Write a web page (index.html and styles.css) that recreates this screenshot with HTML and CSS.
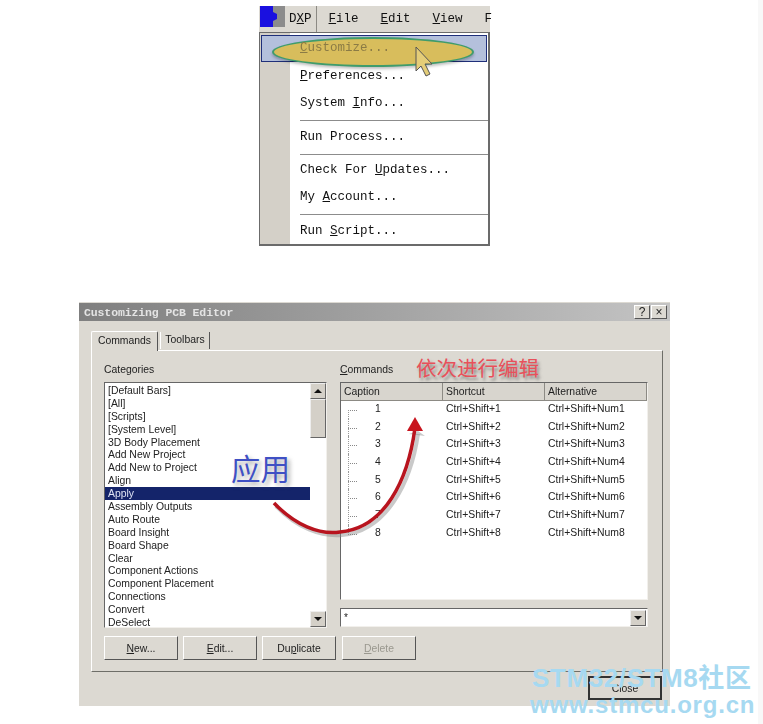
FILE: index.html
```html
<!DOCTYPE html>
<html lang="zh-CN">
<head>
    <meta charset="UTF-8">
    <meta name="viewport" content="width=device-width, initial-scale=1.0">
    <title>Customizing PCB Editor</title>
    <link rel="stylesheet" href="styles.css">
</head>
<body>
    <div class="menu">
        <div class="menubar">
            <svg class="logo" width="25" height="21" viewBox="0 0 25 21">
                <rect x="12" width="13" height="21" fill="#8c8c8c"/>
                <path d="M0 0H13V6L17 8V13L13 15V21H0Z" fill="#1a10e0"/>
            </svg>
            <span class="menubar-item dxp">D<u>X</u>P</span>
            <span class="menubar-item"><u>F</u>ile</span>
            <span class="menubar-item"><u>E</u>dit</span>
            <span class="menubar-item"><u>V</u>iew</span>
            <span class="menubar-item">F</span>
        </div>
        <div class="menu-body">
            <div class="menu-item active"><span class="menu-text"><u>C</u>ustomize...</span></div>
            <div class="menu-item"><u>P</u>references...</div>
            <div class="menu-item">System <u>I</u>nfo...</div>
            <div class="menu-sep"></div>
            <div class="menu-item">Run Process...</div>
            <div class="menu-sep short"></div>
            <div class="menu-item">Check For <u>U</u>pdates...</div>
            <div class="menu-item">My <u>A</u>ccount...</div>
            <div class="menu-sep"></div>
            <div class="menu-item">Run <u>S</u>cript...</div>
        </div>
    </div>

    <div class="dialog">
        <div class="titlebar">
            <span class="title">Customizing PCB Editor</span>
            <span class="title-btn">?</span>
            <span class="title-btn">×</span>
        </div>
        <div class="tabs">
            <span class="tab current">Commands</span>
            <span class="tab">Toolbars</span>
        </div>
        <div class="panel">
            <div class="columns">
                <div class="col">
                    <div class="label">Categories</div>
                    <div class="listbox">
                        <ul class="list">
                            <li>[Default Bars]</li>
                            <li>[All]</li>
                            <li>[Scripts]</li>
                            <li>[System Level]</li>
                            <li>3D Body Placement</li>
                            <li>Add New Project</li>
                            <li>Add New to Project</li>
                            <li>Align</li>
                            <li class="selected">Apply</li>
                            <li>Assembly Outputs</li>
                            <li>Auto Route</li>
                            <li>Board Insight</li>
                            <li>Board Shape</li>
                            <li>Clear</li>
                            <li>Component Actions</li>
                            <li>Component Placement</li>
                            <li>Connections</li>
                            <li>Convert</li>
                            <li>DeSelect</li>
                        </ul>
                        <div class="scrollbar">
                            <span class="arrow-btn up"></span>
                            <span class="thumb"></span>
                            <span class="track"></span>
                            <span class="arrow-btn down"></span>
                        </div>
                    </div>
                </div>
                <div class="col">
                    <div class="label"><u>C</u>ommands</div>
                    <div class="table">
                        <div class="thead">
                            <span>Caption</span>
                            <span>Shortcut</span>
                            <span>Alternative</span>
                        </div>
                        <div class="rows">
                            <div class="row"><span class="num">1</span><span>Ctrl+Shift+1</span><span>Ctrl+Shift+Num1</span></div>
                            <div class="row"><span class="num">2</span><span>Ctrl+Shift+2</span><span>Ctrl+Shift+Num2</span></div>
                            <div class="row"><span class="num">3</span><span>Ctrl+Shift+3</span><span>Ctrl+Shift+Num3</span></div>
                            <div class="row"><span class="num">4</span><span>Ctrl+Shift+4</span><span>Ctrl+Shift+Num4</span></div>
                            <div class="row"><span class="num">5</span><span>Ctrl+Shift+5</span><span>Ctrl+Shift+Num5</span></div>
                            <div class="row"><span class="num">6</span><span>Ctrl+Shift+6</span><span>Ctrl+Shift+Num6</span></div>
                            <div class="row"><span class="num">7</span><span>Ctrl+Shift+7</span><span>Ctrl+Shift+Num7</span></div>
                            <div class="row"><span class="num">8</span><span>Ctrl+Shift+8</span><span>Ctrl+Shift+Num8</span></div>
                        </div>
                    </div>
                    <div class="combo">
                        <span class="combo-text">*</span>
                        <span class="arrow-btn down"></span>
                    </div>
                </div>
            </div>
            <div class="buttons">
                <span class="button"><u>N</u>ew...</span>
                <span class="button"><u>E</u>dit...</span>
                <span class="button">Du<u>p</u>licate</span>
                <span class="button disabled"><u>D</u>elete</span>
            </div>
        </div>
        <div class="footer">
            <span class="button default">Close</span>
        </div>
    </div>

    <!-- annotations pasted over the screenshots -->
    <svg class="overlay" width="763" height="724" viewBox="0 0 763 724">
        <path d="M416 47V71L421 66L426 76L430 74L425 64L432 64Z" fill="#e4cd78" stroke="#555" stroke-width="1"/>
        <path d="M276 506C297 528 321 537 342 535C387 531 411 482 418 434" fill="none" stroke="#888" stroke-width="4" opacity=".45"/>
        <path d="M418 431L409 434L425 436Z" fill="#888" opacity=".45"/>
        <path d="M274 503C295 525 319 535 340 532C385 528 408 480 415 428" fill="none" stroke="#b8141e" stroke-width="3.5"/>
        <path d="M415 417L407 431H423Z" fill="#c8141e"/>
    </svg>
    <span class="note note-blue">应用</span>
    <span class="note note-red">依次进行编辑</span>
    <div class="watermark">
        <div class="wm-top">STM32/STM8社区</div>
        <div class="wm-bottom">www.stmcu.org.cn</div>
    </div>
</body>
</html>
```

FILE: styles.css
```css
* {
    margin: 0;
    padding: 0;
    box-sizing: border-box;
}

html, body {
    height: 724px;
    overflow: hidden;
}

body {
    position: relative;
    background: linear-gradient(90deg, #fff 758px, #f8f8f8 758px);
    font-family: "Liberation Sans", Arial, sans-serif;
    padding-top: 6px;
}

/* top menu */
.menu {
    width: 231px;
    margin-left: 259px;
    font-family: "Liberation Mono", monospace;
    font-size: 12.5px;
    color: #111;
    filter: blur(.4px);
}

.menubar {
    display: flex;
    align-items: center;
    height: 26px;
    background: #dcd9d2;
}

.logo {
    flex: none;
    margin: 0 4px 5px 1px;
}

.menubar-item {
    margin-right: 22px;
    width: 30px;
    white-space: nowrap;
}

.menubar-item:last-child {
    margin-right: 0;
    width: auto;
}

.menubar-item.dxp {
    width: 28px;
    margin-right: 12px;
    padding-right: 4px;
    height: 26px;
    line-height: 26px;
    border-right: 1px solid #8c8a84;
}

.menu-body {
    border: 1px solid #6b6b6b;
    border-width: 1px 2px 2px 1px;
    padding-top: 2px;
    height: 214px;
    background: linear-gradient(90deg, #d4d0c8 30px, #fff 30px);
}

.menu-item {
    height: 27px;
    line-height: 27px;
    padding-left: 40px;
    white-space: nowrap;
}

.menu-item.active {
    position: relative;
    margin: 0 1px 1px;
    padding-left: 38px;
    height: 27px;
    line-height: 25px;
    background: #b4c0dc;
    border: 1px solid #1f2f7a;
}

/* the yellow ring drawn around the hovered entry */
.menu-item.active::before {
    content: "";
    position: absolute;
    left: 10px;
    top: 1px;
    width: 198px;
    height: 26px;
    border-radius: 50%;
    background: #d8bd5c;
    border: 2px solid #3f9c6c;
    box-shadow: 0 2px 3px rgba(0, 0, 0, .25);
}

.menu-text {
    position: relative;
    color: #8b7b45;
}

.menu-sep {
    height: 7px;
    margin-left: 40px;
}

.menu-sep::before {
    content: "";
    display: block;
    height: 3px;
    border-bottom: 1px solid #8c8c8c;
}

.menu-sep.short {
    height: 6px;
}

/* dialog */
.dialog {
    width: 591px;
    height: 404px;
    margin: 56px 0 0 79px;
    background: #dcd9d2;
    font-size: 10.4px;
    color: #222;
    padding-top: 1px;
    filter: blur(.4px);
}

.titlebar {
    display: flex;
    align-items: center;
    gap: 1px;
    height: 18px;
    padding: 0 3px 0 5px;
    background: linear-gradient(90deg, #7f7f7f, #c4c4c4);
}

.title {
    flex: 1;
    font-family: "Liberation Mono", monospace;
    font-weight: bold;
    font-size: 11.5px;
    letter-spacing: -.01em;
    color: #e4e4e4;
}

.title-btn {
    width: 16px;
    height: 14px;
    line-height: 13px;
    text-align: center;
    font-size: 12px;
    color: #222;
    background: #dcd9d2;
    border: 1px solid;
    border-color: #fff #555 #555 #fff;
}

.tabs {
    display: flex;
    align-items: flex-end;
    height: 29px;
    padding-left: 12px;
}

.tab {
    width: 50px;
    height: 17px;
    line-height: 16px;
    margin: 0 0 1px 2px;
    text-align: center;
    border-right: 1px solid #555;
    border-left: 1px solid #fff;
}

.tab.current {
    width: 67px;
    height: 20px;
    line-height: 18px;
    margin: 0 0 -1px;
    background: #dcd9d2;
    border: 1px solid #fff;
    border-right-color: #555;
    border-bottom: 0;
    border-radius: 2px 2px 0 0;
    position: relative;
}

.panel {
    width: 572px;
    height: 322px;
    margin-left: 12px;
    padding: 12px 12px;
    border: 1px solid;
    border-color: #fff #6e6e68 #6e6e68 #fff;
}

.columns {
    display: grid;
    grid-template-columns: 223px 308px;
    gap: 13px;
}

.label {
    height: 14px;
    line-height: 14px;
    margin-bottom: 5px;
}

.listbox {
    display: flex;
    height: 246px;
    background: #fff;
    border: 1px solid;
    border-color: #666 #f2f0ec #f2f0ec #666;
}

.list {
    flex: 1;
    list-style: none;
    overflow: hidden;
    padding-top: 1px;
}

.list li {
    height: 12.9px;
    line-height: 13px;
    padding-left: 3px;
    white-space: nowrap;
}

.list li.selected {
    background: #14246a;
    color: #dfe4f4;
}

.scrollbar {
    display: flex;
    flex-direction: column;
    flex: none;
    width: 16px;
    background: #fff;
}

.thumb {
    height: 39px;
    background: #d4d0c8;
    border: 1px solid;
    border-color: #eee #666 #666 #eee;
}

.track {
    flex: 1;
}

.arrow-btn {
    display: flex;
    align-items: center;
    justify-content: center;
    flex: none;
    width: 16px;
    height: 16px;
    background: #d4d0c8;
    border: 1px solid;
    border-color: #eee #666 #666 #eee;
}

.arrow-btn::before {
    content: "";
    border-left: 4px solid transparent;
    border-right: 4px solid transparent;
}

.arrow-btn.up::before {
    border-bottom: 4px solid #111;
}

.arrow-btn.down::before {
    border-top: 4px solid #111;
}

.table {
    height: 218px;
    background: #fff;
    border: 1px solid;
    border-color: #666 #f2f0ec #f2f0ec #666;
}

.thead {
    display: grid;
    grid-template-columns: 102px 102px 1fr;
    height: 18px;
    line-height: 17px;
    background: #d8d5ce;
    border-bottom: 1px solid #8c8a84;
}

.thead span {
    padding-left: 3px;
    border-right: 1px solid #8c8a84;
}

.row {
    display: grid;
    grid-template-columns: 102px 102px 1fr;
    height: 17.7px;
    line-height: 16px;
}

.row span {
    padding-left: 3px;
}

.row .num {
    position: relative;
    padding-left: 34px;
}

/* tree lines */
.row .num::before {
    content: "";
    position: absolute;
    left: 7px;
    top: 9px;
    width: 9px;
    border-top: 1px dotted #888;
}

.row .num::after {
    content: "";
    position: absolute;
    left: 7px;
    top: 0;
    bottom: 0;
    border-left: 1px dotted #999;
}

.row:first-child .num::after {
    top: 9px;
}

.row:last-child .num::after {
    bottom: 8px;
}

.combo {
    display: flex;
    align-items: center;
    height: 19px;
    margin-top: 8px;
    padding-right: 1px;
    background: #fff;
    border: 1px solid;
    border-color: #666 #f2f0ec #f2f0ec #666;
}

.combo-text {
    flex: 1;
    padding-left: 3px;
    font-size: 10px;
}

.buttons {
    display: flex;
    gap: 5px;
    margin-top: 8px;
}

.button {
    width: 74px;
    height: 24px;
    line-height: 23px;
    text-align: center;
    background: #dcd9d2;
    border: 1px solid;
    border-color: #fff #555 #555 #fff;
}

.button:last-child {
    margin-left: 1px;
}

.button.disabled {
    color: #9a988f;
}

.footer {
    display: flex;
    justify-content: flex-end;
    padding: 4px 8px 0 0;
}

.button.default {
    border: 2px solid #333;
    line-height: 21px;
}

/* pasted annotations and site watermark */
.overlay {
    position: absolute;
    left: 0;
    top: 0;
}

.note {
    position: absolute;
    font-family: "Noto Sans CJK SC", sans-serif;
    line-height: 1;
}

.note-blue {
    left: 231px;
    top: 453px;
    font-size: 29.5px;
    color: #3f50c4;
    text-shadow: 3px 3px 4px rgba(110, 110, 110, .6);
}

.note-red {
    left: 416px;
    top: 357px;
    font-size: 20.5px;
    color: #e8505a;
    text-shadow: 2px 3px 3px rgba(90, 90, 90, .6);
}

.watermark {
    position: absolute;
    left: 530px;
    top: 664px;
    font-weight: bold;
    color: #a6d9f1;
    white-space: nowrap;
}

.wm-top {
    padding-left: 2px;
    font-size: 26px;
    line-height: 29px;
    letter-spacing: .6px;
    font-family: "Liberation Sans", "Noto Sans CJK SC", sans-serif;
}

.wm-bottom {
    font-size: 24px;
    line-height: 24px;
    letter-spacing: .8px;
}
```
